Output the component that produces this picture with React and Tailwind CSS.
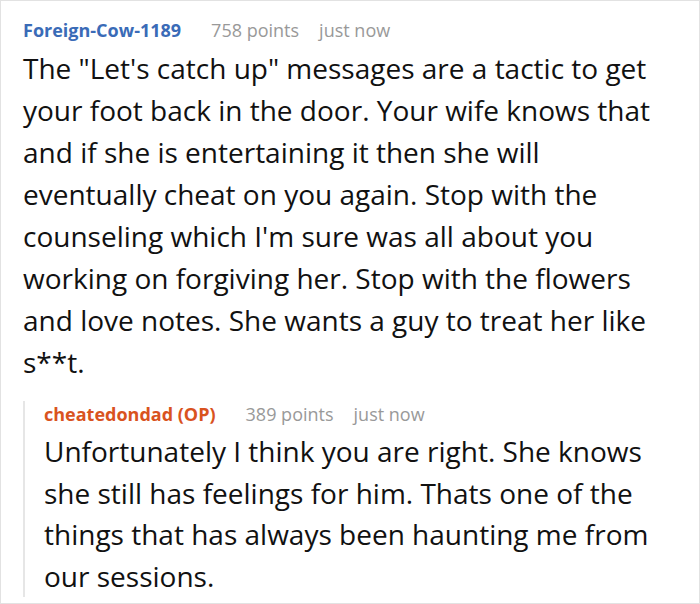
export default function App() {
  return (
    <div className="h-[604px] w-[700px] overflow-hidden border border-[#e2e2e2] bg-white font-['Open_Sans',sans-serif]">
      <div className="px-[22px] pt-[16px]">
        <div className="flex items-baseline text-[18px]">
          <span className="font-bold text-[#3a6bb7]">Foreign-Cow-1189</span>
          <span className="ml-[30px] text-[#999]">758 points</span>
          <span className="ml-[20px] text-[#999]">just now</span>
        </div>
        <p className="mt-[3px] text-[28px] leading-[42px] text-[#111]">
          The "Let's catch up" messages are a tactic to get your foot back in the door. Your wife knows that and if she is entertaining it then she will eventually cheat on you again. Stop with the counseling which I'm sure was all about you working on forgiving her. Stop with the flowers and love notes. She wants a guy to treat her like s**t.
        </p>
        <div className="mt-[29px] border-l-2 border-[#e6e6e6] pl-[19px]">
          <div className="-mt-[11px] flex items-baseline text-[18px]">
            <span className="font-bold text-[#d9531e]">cheatedondad (OP)</span>
            <span className="ml-[30px] text-[#999]">389 points</span>
            <span className="ml-[20px] text-[#999]">just now</span>
          </div>
          <p className="mt-[3px] text-[28px] leading-[41.5px] text-[#111]">
            Unfortunately I think you are right. She knows she still has feelings for him. Thats one of the things that has always been haunting me from our sessions.
          </p>
        </div>
      </div>
    </div>
  )
}
